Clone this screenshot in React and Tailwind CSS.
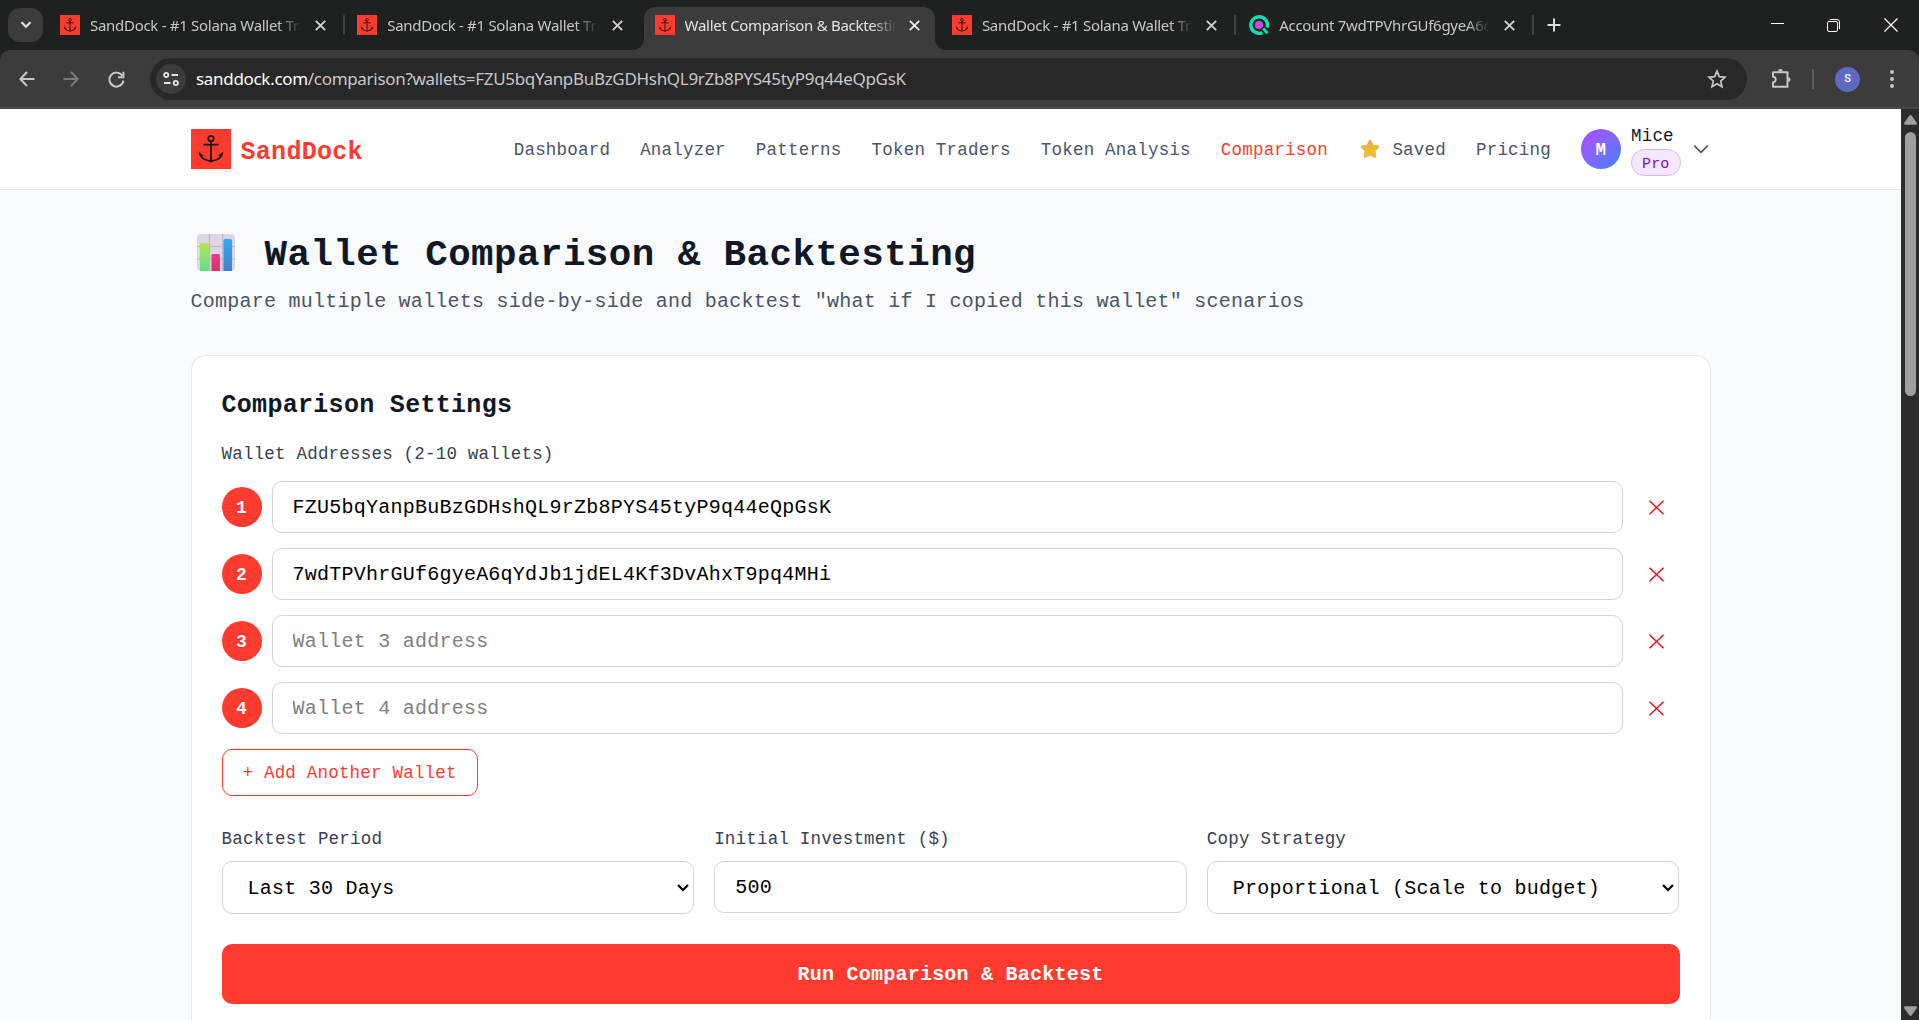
import { useState } from 'react';

const tabs = [
  { title: 'SandDock - #1 Solana Wallet Tracker', icon: 'anchor', divider: true },
  { title: 'SandDock - #1 Solana Wallet Tracker', icon: 'anchor' },
  { title: 'Wallet Comparison & Backtesting', icon: 'anchor', active: true },
  { title: 'SandDock - #1 Solana Wallet Tracker', icon: 'anchor', divider: true },
  { title: 'Account 7wdTPVhrGUf6gyeA6qYdJb1', icon: 'solscan', divider: true },
];

const navLinks = ['Dashboard', 'Analyzer', 'Patterns', 'Token Traders', 'Token Analysis', 'Comparison', 'Saved', 'Pricing'];

export default function App() {
  return (
    <div className="flex h-[1020px] w-[1919px] flex-col overflow-hidden bg-[#1f2020]">
      <TabStrip />
      <Toolbar />
      <div className="flex min-h-0 flex-1">
        <div className="min-w-0 flex-1 overflow-hidden bg-gray-50 font-['Liberation_Mono',monospace] **:tracking-[0.012em]">
          <Header />
          <main className="mx-auto max-w-[1600px] px-10 pt-10">
            <h1 className="flex h-[45px] items-center text-[37.5px] leading-[45px] font-bold text-gray-900">
              <ChartEmoji />
              <span className="pt-[5px]">Wallet Comparison &amp; Backtesting</span>
            </h1>
            <p className="mt-2.5 h-[30px] text-[20px] leading-[33px] text-gray-600">
              Compare multiple wallets side-by-side and backtest "what if I copied this wallet" scenarios
            </p>
            <SettingsCard />
          </main>
        </div>
        <Scrollbar />
      </div>
    </div>
  );
}

function TabStrip() {
  return (
    <div className="flex h-[50px] shrink-0 font-['Noto_Sans',sans-serif]">
      <div className="mt-2 ml-2 flex h-[34px] w-[35px] items-center justify-center rounded-xl bg-[#3c3c3c]">
        <svg width="12" height="8" viewBox="0 0 12 8" fill="none" stroke="#e3e3e3" strokeWidth="2.2">
          <path d="M1.5 1.2 6 5.8l4.5-4.6" />
        </svg>
      </div>
      <div className="ml-[5px] flex">
        {tabs.map((tab, idx) => (
          <Tab key={idx} {...tab} />
        ))}
      </div>
      <svg className="mt-[18px] ml-[13px]" width="14" height="14" viewBox="0 0 14 14" stroke="#dcdcdc" strokeWidth="2">
        <path d="M7 0.5v13M0.5 7h13" />
      </svg>
      <div className="mr-[21px] ml-auto flex h-[50px] items-center text-white">
        <svg className="mr-[42px]" width="13" height="14" viewBox="0 0 13 14" stroke="currentColor">
          <path d="M0 5.5h13" />
        </svg>
        <svg className="mr-[43px]" width="15" height="15" viewBox="0 0 15 15" fill="none" stroke="currentColor">
          <rect x="1.5" y="3.5" width="10" height="10" rx="1.5" />
          <path d="M3.8 1.5h7.2a2.5 2.5 0 0 1 2.5 2.5v7" />
        </svg>
        <svg width="14" height="14" viewBox="0 0 14 14" stroke="currentColor" strokeWidth="1.2">
          <path d="M.5.5l13 13M13.5.5l-13 13" />
        </svg>
      </div>
    </div>
  );
}

function Tab({ title, icon, active, divider }) {
  return (
    <div className="relative flex h-[50px] w-[297.3px] pl-3">
      {active && (
        <svg className="absolute top-[7px] left-[-12px]" width="315" height="43" viewBox="0 0 315 43" fill="#3c3c3c">
          <path d="M0 43c9 0 13-5 13-12V12C13 5 18 0 25 0h267c7 0 12 5 12 12v19c0 7 4 12 11 12z" />
        </svg>
      )}
      <div className="relative flex h-[50px] w-full items-center">
        {icon === 'anchor' ? <AnchorLogo size={20} /> : <SolscanIcon />}
        <span
          className={`ml-2.5 w-[211px] overflow-hidden text-[15px] tracking-[-0.29px] whitespace-nowrap [mask-image:linear-gradient(to_right,black_89%,transparent)] ${
            active ? 'text-[#e3e3e3]' : 'text-[#c7c7c7]'
          }`}
        >
          {title}
        </span>
        <svg className="ml-[13.5px]" width="11" height="11" viewBox="0 0 11 11" stroke={active ? '#e8e8e8' : '#d0d0d0'} strokeWidth="1.9">
          <path d="M.8.8l9.4 9.4M10.2.8.8 10.2" />
        </svg>
        {divider && <div className="ml-[17px] h-5 w-0.5 rounded bg-[#434444]" />}
      </div>
    </div>
  );
}

function Toolbar() {
  return (
    <div className="flex h-[59px] shrink-0 items-center rounded-t-[10px] border-b-2 border-[#474747] bg-[#3c3c3c] pt-px pl-[19px] font-['Noto_Sans',sans-serif]">
      <svg width="16" height="16" viewBox="0 0 16 16" fill="none" stroke="#c7c7c7" strokeWidth="2">
        <path d="M15.5 8H1.500M8 1 1.300 8 8 15" />
      </svg>
      <svg className="ml-7" width="16" height="16" viewBox="0 0 16 16" fill="none" stroke="#7c7c7c" strokeWidth="2">
        <path d="M.5 8h14M8 1l6.700 7L8 15" />
      </svg>
      <svg className="ml-[29px]" width="17" height="17" viewBox="0 0 17 17" fill="none" stroke="#c7c7c7" strokeWidth="2">
        <path d="M14.200 4.600A7 7 0 1 0 15.400 9.600M15.400.8v5.400H10" />
      </svg>
      <div className="ml-[25px] flex h-[42px] w-[1597px] items-center rounded-full bg-[#282828] pl-1.5">
        <div className="flex size-[30px] items-center justify-center rounded-full bg-[#3c3c3c]">
          <svg width="16" height="14" viewBox="0 0 16 14" fill="none" stroke="#e3e3e3" strokeWidth="1.800">
            <circle cx="3.200" cy="3" r="2.100" />
            <path d="M8.500 3H15M1 11h6.500" />
            <circle cx="12.800" cy="11" r="2.100" />
          </svg>
        </div>
        <span className="ml-2.5 text-[17px] tracking-[-0.31px] whitespace-nowrap text-[#c7c7c7]">
          <span className="text-white">sanddock.com</span>/comparison?wallets=FZU5bqYanpBuBzGDHshQL9rZb8PYS45tyP9q44eQpGsK
        </span>
        <svg className="mr-5 ml-auto" width="20" height="20" viewBox="0 0 20 20" fill="none" stroke="#c7c7c7" strokeWidth="1.700">
          <path d="M10 2.200l2.300 5.400 5.800.5-4.400 3.900 1.300 5.700-5-3-5 3 1.300-5.700-4.400-3.900 5.800-.5z" />
        </svg>
      </div>
      <svg className="ml-[23px]" width="22" height="22" viewBox="0 0 22 22" fill="none" stroke="#c7c7c7" strokeWidth="2">
        <path d="M3 4.200h14.500v14.600H3v-4.300c3.600-.8 3.600-5.200 0-6z" strokeLinejoin="round" />
        <path d="M8 3.400a2.400 2.400 0 0 1 4.800 0zM18.300 9.200a2.400 2.400 0 0 1 0 4.800z" fill="#c7c7c7" stroke="none" />
      </svg>
      <div className="ml-5 h-5 w-0.5 bg-[#5c5c5c]" />
      <div className="ml-[21px] flex size-[25px] items-center justify-center rounded-full bg-[#5c6bc0] font-['Roboto',sans-serif] text-[11px] font-medium text-white">S</div>
      <svg className="ml-[29px]" width="6" height="20" viewBox="0 0 6 20" fill="#c7c7c7">
        <circle cx="3" cy="3" r="2" />
        <circle cx="3" cy="10" r="2" />
        <circle cx="3" cy="17" r="2" />
      </svg>
    </div>
  );
}

function Header() {
  return (
    <header className="h-[81px] border-b border-gray-200 bg-white">
      <div className="mx-auto flex h-20 max-w-[1600px] items-center px-10">
        <AnchorLogo size={40} />
        <span className="ml-2.5 pt-[7px] text-[25px] font-bold text-[#ff3b30]">SandDock</span>
        <nav className="ml-auto flex items-center gap-[30px] pt-[3px] text-[17.5px] leading-[25px] text-gray-600">
          {navLinks.map((link) => (
            <a key={link} className={`flex items-center ${link === 'Comparison' ? 'text-[#ff3b30]' : ''}`}>
              {link === 'Saved' && <StarEmoji />}
              {link}
            </a>
          ))}
        </nav>
        <div className="ml-[30px] flex items-center">
          <div className="flex size-10 items-center justify-center rounded-full bg-linear-to-br from-[#ad46ff] to-[#2b7fff] pt-0.5 text-[17.5px] font-bold text-white">
            M
          </div>
          <div className="ml-2.5 flex flex-col items-start gap-0.5">
            <span className="h-[25px] text-[17.5px] leading-[29px] text-gray-900">Mice</span>
            <span className="h-[27px] rounded-full border border-purple-300 bg-purple-100 px-2.5 pt-1 text-[15px] leading-[22px] text-purple-700">
              Pro
            </span>
          </div>
          <svg className="ml-2.5" width="20" height="20" viewBox="0 0 24 24" fill="none" stroke="#4a5565" strokeWidth="2" strokeLinecap="round" strokeLinejoin="round">
            <path d="M4.500 8.500l7.500 7.500 7.500-7.500" />
          </svg>
        </div>
      </div>
    </header>
  );
}

function SettingsCard() {
  const [wallets, setWallets] = useState([
    'FZU5bqYanpBuBzGDHshQL9rZb8PYS45tyP9q44eQpGsK',
    '7wdTPVhrGUf6gyeA6qYdJb1jdEL4Kf3DvAhxT9pq4MHi',
    '',
    '',
  ]);

  const updateWallet = (idx, value) => {
    setWallets(wallets.map((w, i) => (i === idx ? value : w)));
  };

  return (
    <div className="mt-10 h-[800px] rounded-[15px] border border-gray-200 bg-white p-[30px]">
      <h2 className="h-[35px] text-[25px] leading-[39px] font-bold text-gray-900">Comparison Settings</h2>
      <label className="mt-5 block h-[25px] text-[17.5px] leading-[27px] text-gray-700">Wallet Addresses (2-10 wallets)</label>

      <div className="mt-[15px] flex flex-col gap-[15px]">
        {wallets.map((wallet, idx) => (
          <div key={idx} className="flex items-center gap-2.5">
            <div className="flex size-10 shrink-0 items-center justify-center rounded-full bg-[#ff3b30] pt-0.5 text-[17.5px] font-bold text-white">
              {idx + 1}
            </div>
            <input
              className="h-[52px] min-w-0 flex-1 rounded-[10px] border border-gray-300 px-5 pt-px text-[20px] text-black placeholder:text-[#808080]"
              value={wallet}
              placeholder={`Wallet ${idx + 1} address`}
              onChange={(e) => updateWallet(idx, e.target.value)}
            />
            <button
              className="flex h-[52px] w-[47px] items-center justify-center"
              onClick={() => setWallets(wallets.filter((_, i) => i !== idx))}
            >
              <svg width="15" height="15" viewBox="0 0 15 15" stroke="#e7000b" strokeWidth="1.3">
                <path d="M.5.8l14 13.400M14.500.8.5 14.200" />
              </svg>
            </button>
          </div>
        ))}
      </div>

      <button
        className="mt-[15px] block h-[47px] rounded-[10px] border border-[#ff3b30] px-5 pt-0.5 text-[17.5px] leading-[25px] text-[#ff3b30]"
        onClick={() => setWallets([...wallets, ''])}
      >
        + Add Another Wallet
      </button>

      <div className="mt-[30px] grid grid-cols-3 gap-5">
        <Field label="Backtest Period">
          <Select options={['Last 30 Days']} />
        </Field>
        <Field label="Initial Investment ($)">
          <input className="block h-[52px] w-full rounded-[10px] border border-gray-300 px-5 pt-px text-[20px] text-black" defaultValue="500" />
        </Field>
        <Field label="Copy Strategy">
          <Select options={['Proportional (Scale to budget)']} />
        </Field>
      </div>

      <button className="mt-[30px] h-[60px] w-full rounded-[10px] bg-[#ff3b30] pt-0.5 text-[20px] font-bold text-white">
        Run Comparison &amp; Backtest
      </button>
    </div>
  );
}

function Field({ label, children }) {
  return (
    <div>
      <label className="mb-2.5 block h-[25px] text-[17.5px] leading-[27px] text-gray-700">{label}</label>
      {children}
    </div>
  );
}

function Select({ options }) {
  return (
    <div className="relative">
      <select className="block h-[53px] w-full appearance-none rounded-[10px] border border-gray-300 bg-white pt-0.5 pl-[25px] text-[20px] text-black">
        {options.map((option) => (
          <option key={option}>{option}</option>
        ))}
      </select>
      <svg className="absolute top-[23px] right-[5px]" width="12" height="8" viewBox="0 0 12 8" fill="none" stroke="#000" strokeWidth="2.200">
        <path d="M1 1l5 5 5-5" />
      </svg>
    </div>
  );
}

function Scrollbar() {
  return (
    <div className="flex w-[18px] shrink-0 flex-col items-center bg-[#2b2b2b] pt-1.5 pb-1 pl-px">
      <svg width="13" height="10" viewBox="0 0 13 10" fill="#9f9f9f">
        <path d="M5.300.8a1.500 1.500 0 0 1 2.400 0l4.900 6.800c.7 1 .2 2.100-1 2.100H1.400c-1.200 0-1.700-1.100-1-2.100z" />
      </svg>
      <div className="mt-[7px] h-[264px] w-[11px] rounded-full bg-[#9f9f9f]" />
      <svg className="mt-auto" width="13" height="10" viewBox="0 0 13 10" fill="#9f9f9f">
        <path d="M5.300 9.200a1.500 1.500 0 0 0 2.400 0l4.900-6.800c.7-1 .2-2.100-1-2.100H1.400c-1.200 0-1.700 1.100-1 2.100z" />
      </svg>
    </div>
  );
}

function AnchorLogo({ size }) {
  return (
    <svg className="shrink-0" width={size} height={size} viewBox="0 0 40 40">
      <rect width="40" height="40" fill="#ff3b30" />
      <g fill="none" stroke="#1a1414" strokeWidth="1.800">
        <circle cx="20" cy="9.600" r="2.700" />
        <path d="M20 12.300V31M12.500 15.700h15" />
      </g>
      <path d="M7.800 22.600l5 4.400-1.800.1c2 2.600 5 3.800 9 4 4-.2 7-1.400 9-4l-1.800-.1 5-4.400c.2 5.500-4 9.200-10.200 9.800L20 33.600l-2-1.200c-6.200-.6-10.400-4.300-10.200-9.800z" fill="#1a1414" />
    </svg>
  );
}

function SolscanIcon() {
  return (
    <svg className="shrink-0" width="20" height="20" viewBox="0 0 20 20">
      <path d="M13.400 17.600A8.300 8.300 0 1 1 18 12.500" fill="none" stroke="#00e5b5" strokeWidth="3.400" />
      <path d="M14.200 13.400l4.300 4.800" stroke="#00e5b5" strokeWidth="3" />
      <circle cx="10" cy="10" r="4.200" fill="#c74ae3" />
    </svg>
  );
}

function StarEmoji() {
  return (
    <svg className="mr-[10.5px] mb-[3px]" width="24" height="24" viewBox="0 0 24 24">
      <defs>
        <linearGradient id="star" x1="0" y1="0" x2="0" y2="1">
          <stop offset="0" stopColor="#e2b13c" />
          <stop offset="1" stopColor="#eec52f" />
        </linearGradient>
      </defs>
      <path
        d="M11 3.700q1-1.800 2 0l2.100 4.500 4.800.6q1.800.4.600 1.800l-3.400 3.600.8 5q.1 1.800-1.600 1.100L12 18.200l-4.300 2.100q-1.700.7-1.600-1.100l.8-5-3.400-3.600q-1.200-1.400.6-1.800l4.800-.6z"
        fill="url(#star)"
        stroke="#d9a43a"
        strokeWidth=".6"
      />
    </svg>
  );
}

function ChartEmoji() {
  return (
    <svg className="mr-[29.5px] ml-[6.5px]" width="38" height="37" viewBox="0 0 38 37">
      <defs>
        <linearGradient id="green" x1="0" y1="0" x2="0" y2="1">
          <stop offset="0" stopColor="#b5e655" />
          <stop offset="1" stopColor="#62dc8e" />
        </linearGradient>
        <linearGradient id="pink" x1="0" y1="0" x2="0" y2="1">
          <stop offset="0" stopColor="#f0368f" />
          <stop offset="1" stopColor="#d83360" />
        </linearGradient>
        <linearGradient id="blue" x1="0" y1="0" x2="0" y2="1">
          <stop offset="0" stopColor="#35a9f8" />
          <stop offset="1" stopColor="#3d7fcb" />
        </linearGradient>
      </defs>
      <rect width="38" height="37" rx="4" fill="#dcd5e3" />
      <path d="M12.500 0v37M25.700 0v37M0 12.500h38M0 25h38" stroke="#bdb6c6" strokeWidth="1.200" />
      <path d="M3 37V10.500q0-1.500 1.500-1.500h6q1.500 0 1.500 1.500V37z" fill="url(#green)" />
      <path d="M14.500 37V21.500q0-1.500 1.500-1.500h5.500q1.500 0 1.500 1.500V37z" fill="url(#pink)" />
      <path d="M26.500 37V6.500Q26.500 5 28 5h5.500Q35 5 35 6.500V37z" fill="url(#blue)" />
    </svg>
  );
}
